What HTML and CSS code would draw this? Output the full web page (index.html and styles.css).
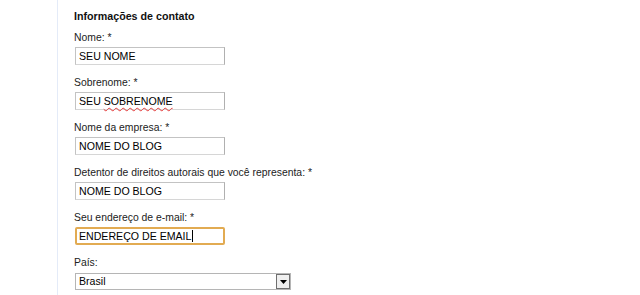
FILE: index.html
```html
<!DOCTYPE html>
<html lang="pt-BR">
<head>
<meta charset="utf-8">
<title>Informações de contato</title>
<link rel="stylesheet" href="styles.css">
</head>
<body>
<div class="page">
  <div class="panel">
    <h2 class="heading">Informações de contato</h2>

    <div class="group">
      <div class="label">Nome: *</div>
      <div class="field">SEU NOME</div>
    </div>

    <div class="group">
      <div class="label">Sobrenome: *</div>
      <div class="field">SEU <span class="misspelled">SOBRENOME</span></div>
    </div>

    <div class="group">
      <div class="label">Nome da empresa: *</div>
      <div class="field">NOME DO BLOG</div>
    </div>

    <div class="group">
      <div class="label">Detentor de direitos autorais que você representa: *</div>
      <div class="field">NOME DO BLOG</div>
    </div>

    <div class="group">
      <div class="label">Seu endereço de e-mail: *</div>
      <div class="field focused">ENDEREÇO DE EMAIL<span class="caret"></span></div>
    </div>

    <div class="group">
      <div class="label">País:</div>
      <div class="select">
        <span class="select-value">Brasil</span>
        <span class="select-btn"><svg width="7" height="4" viewBox="0 0 7 4"><path d="M0 0H7L3.5 4Z" fill="#000"/></svg></span>
      </div>
    </div>
  </div>
</div>
</body>
</html>
```

FILE: styles.css
```css
html, body {
  margin: 0;
  padding: 0;
  background: #fff;
}

.page {
  min-height: 295px;
  padding-left: 57px;
  font-family: "Liberation Sans", Arial, sans-serif;
}

.panel {
  min-height: 295px;
  border-left: 1px solid #e4ebf8;
  padding: 10px 0 0 16px;
  box-sizing: border-box;
}

.heading {
  margin: 0 0 8px 0;
  font-size: 10.7px;
  line-height: 13px;
  font-weight: bold;
  color: #111;
}

.group {
  display: flex;
  flex-direction: column;
  align-items: flex-start;
  margin-bottom: 11px;
}

.label {
  font-size: 10.4px;
  line-height: 13px;
  color: #222;
  margin-bottom: 3px;
}

.field {
  box-sizing: border-box;
  width: 150px;
  height: 18px;
  margin-left: 1px;
  border: 1px solid #c3c3c3;
  border-right-color: #b0b0b0;
  border-bottom-color: #d6d6d6;
  background: #fff;
  padding: 0 3px;
  font-size: 10.6px;
  line-height: 16px;
  color: #000;
  white-space: nowrap;
  display: flex;
  align-items: center;
}

.misspelled {
  margin-left: 0.28em;
  text-decoration: underline wavy #e23a3a;
  text-decoration-thickness: 1px;
  text-underline-offset: 2px;
}

.field.focused {
  border: 2px solid #e2ab52;
  border-radius: 2px;
  padding: 0 2px;
}

.caret {
  display: inline-block;
  width: 1px;
  height: 12px;
  background: #000;
  margin-left: 1px;
}

.select {
  box-sizing: border-box;
  width: 216px;
  height: 17px;
  margin-left: 1px;
  margin-top: 1px;
  border: 1px solid #b5b5b5;
  display: flex;
  align-items: stretch;
  background: #fff;
}

.select-value {
  flex: 1;
  padding-left: 3px;
  font-size: 10.6px;
  line-height: 15px;
  color: #000;
}

.select-btn {
  box-sizing: border-box;
  width: 14px;
  border: 1px solid #6f6f6f;
  background: #efefef;
  display: flex;
  align-items: center;
  justify-content: center;
}
```
